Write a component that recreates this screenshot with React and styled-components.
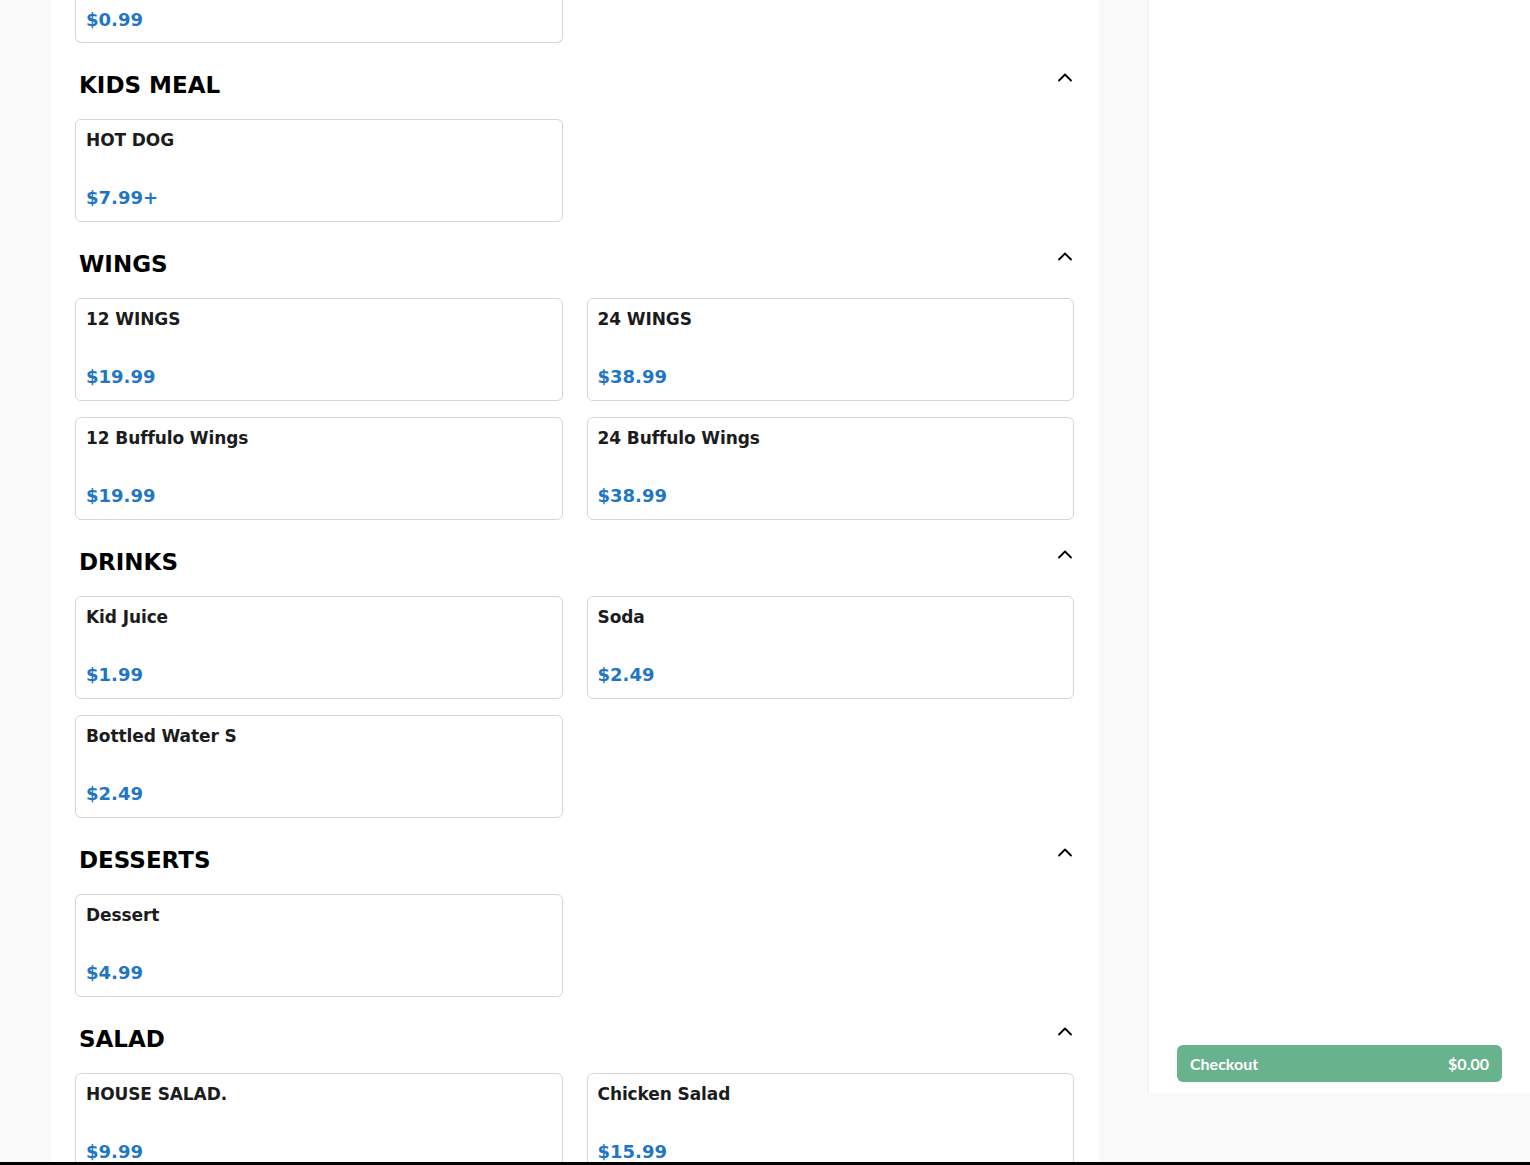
import styled, { createGlobalStyle } from 'styled-components';

const GlobalStyle = createGlobalStyle`
  html, body {
    margin: 0;
    padding: 0;
    background: #f9f9f9;
    font-family: 'DejaVu Sans', 'Liberation Sans', sans-serif;
  }
`;

const Page = styled.div`
  display: flex;
  align-items: flex-start;
  gap: 49px;
  padding-left: 51px;
  min-height: 100vh;
`;

const Main = styled.main`
  width: 1048px;
  min-height: 1162px;
  background: #fff;
  padding: 0 25px 0 24px;
  box-sizing: border-box;
`;

const Section = styled.section`
  margin-bottom: 21px;
`;

const SectionHeader = styled.div`
  display: flex;
  justify-content: space-between;
  align-items: center;
  height: 40px;
  padding-left: 4px;
  margin-bottom: 15px;
`;

const SectionTitle = styled.h2`
  margin: 0;
  margin-top: 2px;
  font-size: 23px;
  font-weight: bold;
  color: #000;
`;

const Toggle = styled.button`
  border: none;
  background: none;
  padding: 0;
  width: 16px;
  height: 16px;
  margin-bottom: 12px;
  margin-right: 1px;
  display: flex;
  align-items: center;
  justify-content: center;
  cursor: pointer;
`;

const Grid = styled.div`
  display: grid;
  grid-template-columns: 1fr 1fr;
  column-gap: 24px;
  row-gap: 16px;
`;

const Card = styled.div`
  display: flex;
  flex-direction: column;
  justify-content: space-between;
  height: ${p => (p.$cut ? '43px' : '103px')};
  box-sizing: border-box;
  padding: ${p => (p.$cut ? '0 10px 11px' : '9px 10px 12px')};
  border: 1px solid #d6d6d6;
  border-top: ${p => (p.$cut ? 'none' : '1px solid #d6d6d6')};
  border-radius: ${p => (p.$cut ? '0 0 6px 6px' : '6px')};
  background: #fff;
  cursor: pointer;
`;

const ItemName = styled.div`
  font-size: 17px;
  font-weight: bold;
  color: #1c1c1e;
  line-height: 22px;
  letter-spacing: -0.1px;
`;

const Price = styled.div`
  font-size: 18px;
  font-weight: bold;
  color: #1f76c7;
  line-height: 22px;
  margin-top: auto;
`;

const Sidebar = styled.aside`
  position: sticky;
  top: 0;
  width: 382px;
  height: 1093px;
  background: #fff;
  border-left: 1px solid #f1f1f1;
  box-sizing: border-box;
  display: flex;
  flex-direction: column;
  justify-content: flex-end;
  padding: 0 28px 11px;
`;

const CheckoutButton = styled.button`
  display: flex;
  justify-content: space-between;
  align-items: center;
  height: 37px;
  padding: 0 13px;
  border: none;
  border-radius: 6px;
  background: #69b28e;
  color: #fff;
  font-family: 'Lato', 'Open Sans', sans-serif;
  font-weight: bold;
  font-size: 16px;
  cursor: pointer;
`;

const BottomBar = styled.div`
  position: fixed;
  left: 0;
  right: 0;
  bottom: 0;
  height: 3px;
  background: #000;
`;

const Chevron = () => (
  <svg width="16" height="16" viewBox="0 0 16 16" fill="none">
    <path d="M2 10.5L8 4.5L14 10.5" stroke="#000" strokeWidth="1.8" strokeLinecap="round" strokeLinejoin="round" />
  </svg>
);

const sections = [
  { title: 'KIDS MEAL', items: [['HOT DOG', '$7.99+']] },
  {
    title: 'WINGS',
    items: [
      ['12 WINGS', '$19.99'],
      ['24 WINGS', '$38.99'],
      ['12 Buffulo Wings', '$19.99'],
      ['24 Buffulo Wings', '$38.99'],
    ],
  },
  {
    title: 'DRINKS',
    items: [
      ['Kid Juice', '$1.99'],
      ['Soda', '$2.49'],
      ['Bottled Water S', '$2.49'],
    ],
  },
  { title: 'DESSERTS', items: [['Dessert', '$4.99']] },
  {
    title: 'SALAD',
    items: [
      ['HOUSE SALAD.', '$9.99'],
      ['Chicken Salad', '$15.99'],
    ],
  },
];

const App = () => {
  return (
    <>
      <GlobalStyle />
      <Page>
        <Main>
          <Section>
            <Grid>
              <Card $cut>
                <Price>$0.99</Price>
              </Card>
            </Grid>
          </Section>
          {sections.map(section => (
            <Section key={section.title}>
              <SectionHeader>
                <SectionTitle>{section.title}</SectionTitle>
                <Toggle aria-label="collapse">
                  <Chevron />
                </Toggle>
              </SectionHeader>
              <Grid>
                {section.items.map(([name, price]) => (
                  <Card key={name}>
                    <ItemName>{name}</ItemName>
                    <Price>{price}</Price>
                  </Card>
                ))}
              </Grid>
            </Section>
          ))}
        </Main>
        <Sidebar>
          <CheckoutButton>
            <span>Checkout</span>
            <span>$0.00</span>
          </CheckoutButton>
        </Sidebar>
      </Page>
      <BottomBar />
    </>
  );
};

export default App;
